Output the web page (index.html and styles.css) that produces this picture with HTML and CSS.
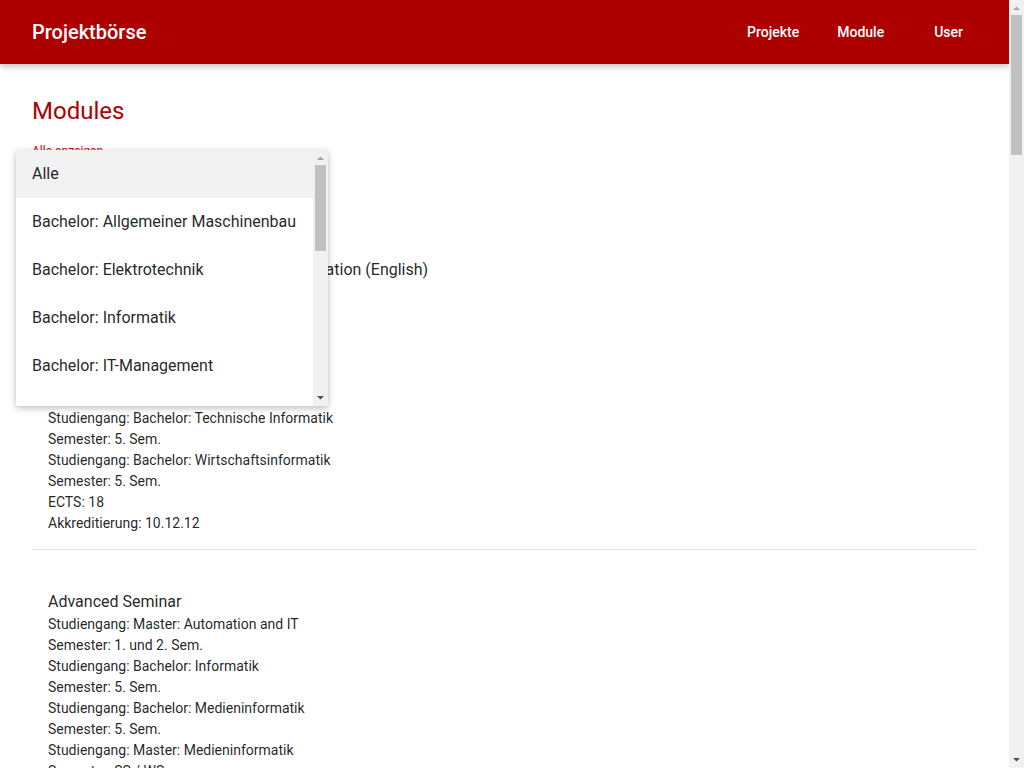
FILE: index.html
```html
<!DOCTYPE html>
<html lang="de">
<head>
<meta charset="utf-8">
<title>Projektbörse – Modules</title>
<link rel="stylesheet" href="styles.css">
</head>
<body>
<nav class="navbar">
  <a class="brand" href="#">Projektbörse</a>
  <ul class="nav-links">
    <li class="projects"><a href="#">Projekte</a></li>
    <li><a href="#">Module</a></li>
    <li class="user"><a href="#">User</a></li>
  </ul>
</nav>

<main class="page">
  <h1 class="page-title">Modules</h1>

  <div class="filter">
    <label class="filter-label">Alle anzeigen</label>
    <div class="select-input">Alle</div>
    <div class="dropdown">
      <ul class="options">
        <li class="selected">Alle</li>
        <li>Bachelor: Allgemeiner Maschinenbau</li>
        <li>Bachelor: Elektrotechnik</li>
        <li>Bachelor: Informatik</li>
        <li>Bachelor: IT-Management</li>
        <li>Bachelor: Medieninformatik</li>
        <li>Bachelor: Technische Informatik</li>
        <li>Bachelor: Wirtschaftsinformatik</li>
        <li>Bachelor: Wirtschaftsingenieurwesen</li>
        <li>Master: Automation and IT</li>
        <li>Master: Informatik</li>
        <li>Master: Medieninformatik</li>
        <li>Master: Web Engineering</li>
        <li>Master: Wirtschaftsinformatik</li>
      </ul>
      <div class="scrollbar">
        <svg class="sb-arrow" width="15" height="15" viewBox="0 0 15 15"><polygon points="4,10 11,10 7.5,6.5" fill="#a3a3a3"/></svg>
        <div class="sb-track">
          <div class="sb-thumb dd-thumb"></div>
        </div>
        <svg class="sb-arrow" width="15" height="15" viewBox="0 0 15 15"><polygon points="4,5 11,5 7.5,8.5" fill="#505050"/></svg>
      </div>
    </div>
  </div>

  <ul class="modules">
    <li class="module">
      <div class="module-title">Academic Writing and Seminar Presentation (English)</div>
      <div>Studiengang: Bachelor: Informatik</div>
      <div>Semester: 5. Sem.</div>
      <div>Studiengang: Bachelor: IT-Management</div>
      <div>Semester: 5. Sem.</div>
      <div>Studiengang: Bachelor: Medieninformatik</div>
      <div>Semester: 5. Sem.</div>
      <div>Studiengang: Bachelor: Technische Informatik</div>
      <div>Semester: 5. Sem.</div>
      <div>Studiengang: Bachelor: Wirtschaftsinformatik</div>
      <div>Semester: 5. Sem.</div>
      <div>ECTS: 18</div>
      <div>Akkreditierung: 10.12.12</div>
    </li>
    <li class="module">
      <div class="module-title">Advanced Seminar</div>
      <div>Studiengang: Master: Automation and IT</div>
      <div>Semester: 1. und 2. Sem.</div>
      <div>Studiengang: Bachelor: Informatik</div>
      <div>Semester: 5. Sem.</div>
      <div>Studiengang: Bachelor: Medieninformatik</div>
      <div>Semester: 5. Sem.</div>
      <div>Studiengang: Master: Medieninformatik</div>
      <div>Semester: SS / WS</div>
      <div>ECTS: 6</div>
      <div>Akkreditierung: 10.12.12</div>
    </li>
    <li class="module">
      <div class="module-title">Anwendungsentwicklung</div>
      <div>Studiengang: Bachelor: Informatik</div>
      <div>Semester: 4. Sem.</div>
      <div>Studiengang: Bachelor: Wirtschaftsinformatik</div>
      <div>Semester: 4. Sem.</div>
      <div>Studiengang: Bachelor: IT-Management</div>
      <div>Semester: 4. Sem.</div>
      <div>ECTS: 6</div>
      <div>Akkreditierung: 10.12.12</div>
    </li>
    <li class="module">
      <div class="module-title">Bachelorarbeit</div>
      <div>Studiengang: Bachelor: Allgemeiner Maschinenbau</div>
      <div>Semester: 7. Sem.</div>
      <div>Studiengang: Bachelor: Elektrotechnik</div>
      <div>Semester: 7. Sem.</div>
      <div>Studiengang: Bachelor: Informatik</div>
      <div>Semester: 6. Sem.</div>
      <div>Studiengang: Bachelor: Medieninformatik</div>
      <div>Semester: 6. Sem.</div>
      <div>Studiengang: Bachelor: Wirtschaftsinformatik</div>
      <div>Semester: 6. Sem.</div>
      <div>ECTS: 12</div>
      <div>Akkreditierung: 10.12.12</div>
    </li>
    <li class="module">
      <div class="module-title">Entwicklungsprojekt</div>
      <div>Studiengang: Bachelor: Technische Informatik</div>
      <div>Semester: 6. Sem.</div>
      <div>Studiengang: Bachelor: Elektrotechnik</div>
      <div>Semester: 6. Sem.</div>
      <div>ECTS: 12</div>
      <div>Akkreditierung: 10.12.12</div>
    </li>
    <li class="module">
      <div class="module-title">Informatik-Projekt</div>
      <div>Studiengang: Bachelor: Informatik</div>
      <div>Semester: 5. Sem.</div>
      <div>Studiengang: Bachelor: IT-Management</div>
      <div>Semester: 5. Sem.</div>
      <div>Studiengang: Bachelor: Medieninformatik</div>
      <div>Semester: 5. Sem.</div>
      <div>ECTS: 18</div>
      <div>Akkreditierung: 10.12.12</div>
    </li>
    <li class="module">
      <div class="module-title">Masterarbeit</div>
      <div>Studiengang: Master: Automation and IT</div>
      <div>Semester: 4. Sem.</div>
      <div>Studiengang: Master: Informatik</div>
      <div>Semester: 4. Sem.</div>
      <div>Studiengang: Master: Medieninformatik</div>
      <div>Semester: 4. Sem.</div>
      <div>Studiengang: Master: Web Engineering</div>
      <div>Semester: 4. Sem.</div>
      <div>ECTS: 30</div>
      <div>Akkreditierung: 10.12.12</div>
    </li>
    <li class="module">
      <div class="module-title">Praxisprojekt</div>
      <div>Studiengang: Bachelor: Allgemeiner Maschinenbau</div>
      <div>Semester: 6. Sem.</div>
      <div>Studiengang: Bachelor: Wirtschaftsingenieurwesen</div>
      <div>Semester: 6. Sem.</div>
      <div>ECTS: 15</div>
      <div>Akkreditierung: 10.12.12</div>
    </li>
    <li class="module">
      <div class="module-title">Projektarbeit</div>
      <div>Studiengang: Master: Informatik</div>
      <div>Semester: 2. Sem.</div>
      <div>Studiengang: Master: Wirtschaftsinformatik</div>
      <div>Semester: 2. Sem.</div>
      <div>Studiengang: Master: Medieninformatik</div>
      <div>Semester: 2. Sem.</div>
      <div>ECTS: 12</div>
      <div>Akkreditierung: 10.12.12</div>
    </li>
    <li class="module">
      <div class="module-title">Softwaretechnik-Praktikum</div>
      <div>Studiengang: Bachelor: Informatik</div>
      <div>Semester: 3. Sem.</div>
      <div>Studiengang: Bachelor: Technische Informatik</div>
      <div>Semester: 3. Sem.</div>
      <div>Studiengang: Bachelor: Wirtschaftsinformatik</div>
      <div>Semester: 3. Sem.</div>
      <div>ECTS: 6</div>
      <div>Akkreditierung: 10.12.12</div>
    </li>
    <li class="module">
      <div class="module-title">Teamprojekt</div>
      <div>Studiengang: Bachelor: Medieninformatik</div>
      <div>Semester: 4. Sem.</div>
      <div>Studiengang: Bachelor: IT-Management</div>
      <div>Semester: 4. Sem.</div>
      <div>ECTS: 9</div>
      <div>Akkreditierung: 10.12.12</div>
    </li>
    <li class="module">
      <div class="module-title">Web Engineering Projekt</div>
      <div>Studiengang: Master: Web Engineering</div>
      <div>Semester: 1. und 2. Sem.</div>
      <div>Studiengang: Master: Informatik</div>
      <div>Semester: SS / WS</div>
      <div>ECTS: 12</div>
      <div>Akkreditierung: 10.12.12</div>
    </li>
  </ul>
</main>

<div class="scrollbar page-scrollbar">
  <svg class="sb-arrow" width="15" height="15" viewBox="0 0 15 15"><polygon points="4,10 11,10 7.5,6.5" fill="#a3a3a3"/></svg>
  <div class="sb-track">
    <div class="sb-thumb page-thumb"></div>
  </div>
  <svg class="sb-arrow" width="15" height="15" viewBox="0 0 15 15"><polygon points="4,5 11,5 7.5,8.5" fill="#505050"/></svg>
</div>
</body>
</html>
```

FILE: styles.css
```css
* { box-sizing: border-box; }

html, body {
  margin: 0;
  padding: 0;
}

body {
  font-family: Roboto, "Noto Sans", "Liberation Sans", sans-serif;
  color: rgba(0, 0, 0, 0.87);
  background: #fff;
  padding-right: 15px;
}

/* ---------- navbar ---------- */
.navbar {
  height: 64px;
  background: #ad0000;
  display: flex;
  align-items: center;
  justify-content: space-between;
  padding: 0 32px;
  box-shadow: 0 2px 5px 0 rgba(0, 0, 0, 0.16), 0 2px 10px 0 rgba(0, 0, 0, 0.12);
  position: relative;
  z-index: 2;
}

.brand {
  color: #fff;
  text-decoration: none;
  font-size: 20px;
  font-weight: 500;
}

.nav-links {
  list-style: none;
  margin: 0;
  padding: 0;
  display: flex;
  height: 64px;
}

.nav-links li a {
  display: flex;
  align-items: center;
  height: 64px;
  padding: 0 20px;
  color: #fff;
  text-decoration: none;
  font-size: 14px;
  font-weight: 500;
}

.nav-links li.projects a {
  padding: 0 18px 0 20px;
}

.nav-links li.user a {
  padding: 0 14px 0 30px;
}

/* ---------- page ---------- */
.page {
  position: relative;
  padding: 31px 32px 0;
}

.page-title {
  margin: 0;
  color: #ad0000;
  font-size: 24px;
  font-weight: 400;
  line-height: 32px;
}

.filter {
  margin-top: 17px;
  height: 74px;
}

.filter-label {
  display: block;
  color: #d50000;
  font-size: 12px;
  line-height: 14px;
}

.select-input {
  width: 296px;
  height: 46px;
  line-height: 45px;
  font-size: 16px;
  border-bottom: 1px solid #9e9e9e;
}

/* ---------- dropdown ---------- */
.dropdown {
  position: absolute;
  left: 16px;
  top: 86px;
  width: 312px;
  height: 256px;
  display: flex;
  background: #fff;
  overflow: hidden;
  z-index: 5;
  box-shadow: 0 2px 5px 0 rgba(0, 0, 0, 0.16), 0 2px 10px 0 rgba(0, 0, 0, 0.12);
}

.options {
  flex: 1;
  margin: 0;
  padding: 0;
  list-style: none;
  overflow: hidden;
}

.options li {
  height: 48px;
  line-height: 48px;
  padding: 0 16px;
  font-size: 16px;
  color: rgba(0, 0, 0, 0.87);
  white-space: nowrap;
}

.options li.selected {
  background: #f2f2f2;
}

/* ---------- scrollbars (drawn) ---------- */
.scrollbar {
  width: 15px;
  flex: none;
  display: flex;
  flex-direction: column;
  background: #f1f1f1;
}

.sb-arrow {
  display: block;
  flex: none;
}

.sb-track {
  flex: 1;
  padding: 0 2px;
}

.sb-thumb {
  background: #c1c1c1;
}

.dd-thumb {
  height: 86px;
}

.page-scrollbar {
  position: fixed;
  top: 0;
  right: 0;
  height: 100vh;
  z-index: 10;
}

.page-thumb {
  height: 140px;
}

/* ---------- modules ---------- */
.modules {
  list-style: none;
  margin: 0;
  padding: 0;
}

.module {
  padding: 41px 16px 15px;
  border-bottom: 1px solid #e0e0e0;
  font-size: 14px;
  line-height: 21px;
}

.module-title {
  font-size: 16px;
  line-height: 22px;
  margin-bottom: 1px;
}
```
